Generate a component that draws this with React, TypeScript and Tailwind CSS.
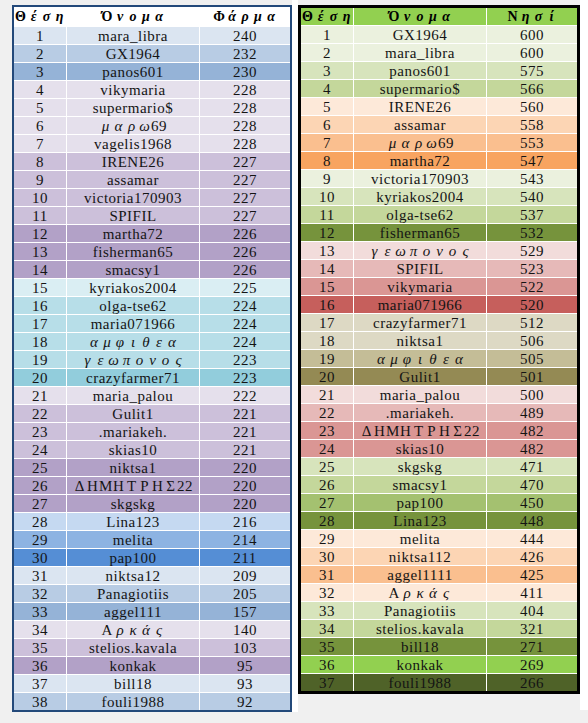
const farm = [
  [1, "mara_libra", 240, "bg-[#dbe5f1]"],
  [2, "GX1964", 232, "bg-[#b8cce4]"],
  [3, "panos601", 230, "bg-[#95b3d7]"],
  [4, "vikymaria", 228, "bg-[#e5e0ec]"],
  [5, "supermario$", 228, "bg-[#e5e0ec]"],
  [6, "μαρω69", 228, "bg-[#e5e0ec]"],
  [7, "vagelis1968", 228, "bg-[#e5e0ec]"],
  [8, "IRENE26", 227, "bg-[#ccc0da]"],
  [9, "assamar", 227, "bg-[#ccc0da]"],
  [10, "victoria170903", 227, "bg-[#ccc0da]"],
  [11, "SPIFIL", 227, "bg-[#ccc0da]"],
  [12, "martha72", 226, "bg-[#b2a1c7]"],
  [13, "fisherman65", 226, "bg-[#b2a1c7]"],
  [14, "smacsy1", 226, "bg-[#b2a1c7]"],
  [15, "kyriakos2004", 225, "bg-[#daeef3]"],
  [16, "olga-tse62", 224, "bg-[#b7dee8]"],
  [17, "maria071966", 224, "bg-[#b7dee8]"],
  [18, "αμφιθεα", 224, "bg-[#b7dee8]"],
  [19, "γεωπονος", 223, "bg-[#b7dee8]"],
  [20, "crazyfarmer71", 223, "bg-[#92cddc]"],
  [21, "maria_palou", 222, "bg-[#e5e0ec]"],
  [22, "Gulit1", 221, "bg-[#ccc0da]"],
  [23, ".mariakeh.", 221, "bg-[#ccc0da]"],
  [24, "skias10", 221, "bg-[#ccc0da]"],
  [25, "niktsa1", 220, "bg-[#b2a1c7]"],
  [26, "ΔΗΜΗΤΡΗΣ22", 220, "bg-[#b2a1c7]"],
  [27, "skgskg", 220, "bg-[#b2a1c7]"],
  [28, "Lina123", 216, "bg-[#c5d9f1]"],
  [29, "melita", 214, "bg-[#8db3e2]"],
  [30, "pap100", 211, "bg-[#558ed5]"],
  [31, "niktsa12", 209, "bg-[#dbe5f1]"],
  [32, "Panagiotiis", 205, "bg-[#b8cce4]"],
  [33, "aggel111", 157, "bg-[#95b3d7]"],
  [34, "Αρκάς", 140, "bg-[#e5e0ec]"],
  [35, "stelios.kavala", 103, "bg-[#ccc0da]"],
  [36, "konkak", 95, "bg-[#b2a1c7]"],
  [37, "bill18", 93, "bg-[#dbe5f1]"],
  [38, "fouli1988", 92, "bg-[#b8cce4]"],
] as const;

const island = [
  [1, "GX1964", 600, "bg-[#ebf1de]"],
  [2, "mara_libra", 600, "bg-[#ebf1de]"],
  [3, "panos601", 575, "bg-[#d7e4bc]"],
  [4, "supermario$", 566, "bg-[#c4d79b]"],
  [5, "IRENE26", 560, "bg-[#fde9d9]"],
  [6, "assamar", 558, "bg-[#fcd5b4]"],
  [7, "μαρω69", 553, "bg-[#fabf8f]"],
  [8, "martha72", 547, "bg-[#f8a460]"],
  [9, "victoria170903", 543, "bg-[#ebf1de]"],
  [10, "kyriakos2004", 540, "bg-[#d7e4bc]"],
  [11, "olga-tse62", 537, "bg-[#c4d79b]"],
  [12, "fisherman65", 532, "bg-[#76933c]"],
  [13, "γεωπονος", 529, "bg-[#f2dcdb]"],
  [14, "SPIFIL", 523, "bg-[#e6b9b8]"],
  [15, "vikymaria", 522, "bg-[#da9694]"],
  [16, "maria071966", 520, "bg-[#c65f5c]"],
  [17, "crazyfarmer71", 512, "bg-[#ddd9c4]"],
  [18, "niktsa1", 506, "bg-[#ddd9c4]"],
  [19, "αμφιθεα", 505, "bg-[#c4bd97]"],
  [20, "Gulit1", 501, "bg-[#948a54]"],
  [21, "maria_palou", 500, "bg-[#f2dcdb]"],
  [22, ".mariakeh.", 489, "bg-[#e6b9b8]"],
  [23, "ΔΗΜΗΤΡΗΣ22", 482, "bg-[#da9694]"],
  [24, "skias10", 482, "bg-[#da9694]"],
  [25, "skgskg", 471, "bg-[#d7e4bc]"],
  [26, "smacsy1", 470, "bg-[#c4d79b]"],
  [27, "pap100", 450, "bg-[#a4c170]"],
  [28, "Lina123", 448, "bg-[#76933c]"],
  [29, "melita", 444, "bg-[#fde9d9]"],
  [30, "niktsa112", 426, "bg-[#fcd5b4]"],
  [31, "aggel1111", 425, "bg-[#fabf8f]"],
  [32, "Αρκάς", 411, "bg-[#fde9d9]"],
  [33, "Panagiotiis", 404, "bg-[#d7e4bc]"],
  [34, "stelios.kavala", 321, "bg-[#c4d79b]"],
  [35, "bill18", 271, "bg-[#76933c]"],
  [36, "konkak", 269, "bg-[#92d050]"],
  [37, "fouli1988", 266, "bg-[#4f6228]"],
] as const;

const greek = /[\u0370-\u03ff\u1f00-\u1fff]/;

// greek letters sit in full-width slots, like the original CJK font draws them
const Txt = ({ s }: { s: string }) => {
  const parts: { g: boolean; t: string }[] = [];
  for (const ch of s) {
    const g = greek.test(ch);
    const last = parts[parts.length - 1];
    if (!g && last && !last.g) last.t += ch;
    else parts.push({ g, t: ch });
  }
  return (
    <span className="whitespace-nowrap">
      {parts.map((p, i) =>
        p.g ? (
          <span
            key={i}
            className={`inline-block w-[13px] text-center tracking-normal ${
              p.t !== p.t.toUpperCase() ? "italic" : ""
            }`}
          >
            {p.t}
          </span>
        ) : (
          <span key={i}>{p.t}</span>
        )
      )}
    </span>
  );
};

const Table = ({
  rows,
  last,
  frame,
  head,
  headH,
}: {
  rows: readonly (readonly [number, string, number, string])[];
  last: string;
  frame: string;
  head: string;
  headH: string;
}) => (
  <div className={frame}>
    <div className="grid grid-cols-[52px_132px_90px] gap-px bg-white">
      {["Θέση", "Όνομα", last].map((h) => (
        <div
          key={h}
          className={`${head} ${headH} flex items-center justify-center font-bold text-[14px] tracking-normal text-black`}
        >
          <Txt s={h} />
        </div>
      ))}
      {rows.map(([n, name, v, bg]) => (
        <div key={n} className="contents">
          <div className={`${bg} h-[17px] pt-[2px] flex items-center justify-center`}>{n}</div>
          <div className={`${bg} h-[17px] pt-[2px] flex items-center justify-center`}>
            <Txt s={name} />
          </div>
          <div className={`${bg} h-[17px] pt-[2px] flex items-center justify-center`}>{v}</div>
        </div>
      ))}
    </div>
  </div>
);

export default function App() {
  return (
    <div className="flex h-[723px] w-[588px] bg-[#f0f0f0] font-['Liberation_Serif',serif] text-[15px] tracking-[0.5px] text-[#141414] leading-none">
      <div className="pl-[12px] pt-[5px]">
        <Table
          rows={farm}
          last="Φάρμα"
          frame="border-2 border-[#23497a] bg-white"
          head="bg-white"
          headH="h-[19px]"
        />
      </div>
      <div className="w-[6px] h-[712px] bg-white" />
      <div className="pt-[5px]">
        <Table
          rows={island}
          last="Νησί"
          frame="border-[3px] border-black bg-white"
          head="bg-[#92d050]"
          headH="h-[17px]"
        />
      </div>
      <div className="w-[8px] h-[710px] bg-white" />
    </div>
  );
}
